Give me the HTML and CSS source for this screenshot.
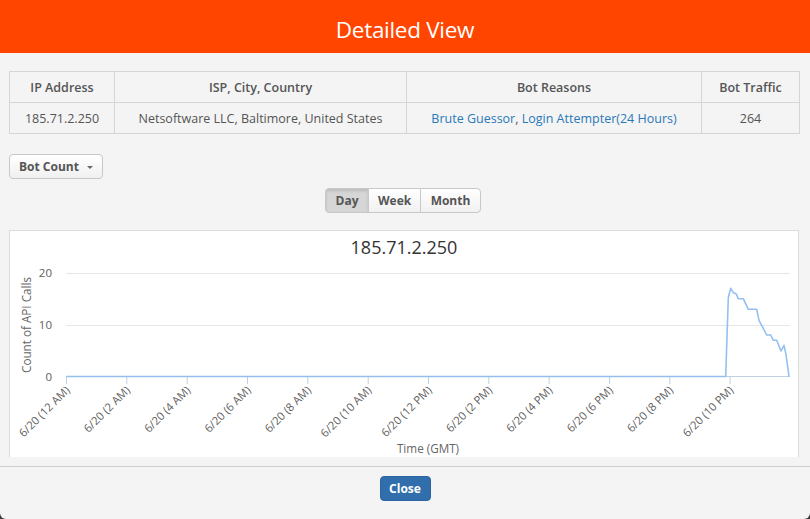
FILE: index.html
```html
<!DOCTYPE html>
<html lang="en">
<head>
<meta charset="utf-8">
<title>Detailed View</title>
<link rel="stylesheet" href="styles.css">
</head>
<body>
<div class="modal">
  <header class="modal-header">
    <h1 class="modal-title">Detailed View</h1>
  </header>
  <div class="modal-body">
    <table class="info-table">
      <colgroup>
        <col class="c1"><col class="c2"><col class="c3"><col class="c4">
      </colgroup>
      <thead>
        <tr><th>IP Address</th><th>ISP, City, Country</th><th>Bot Reasons</th><th>Bot Traffic</th></tr>
      </thead>
      <tbody>
        <tr>
          <td>185.71.2.250</td>
          <td>Netsoftware LLC, Baltimore, United States</td>
          <td><a class="link" href="#">Brute Guessor</a>, <a class="link" href="#">Login Attempter(24 Hours)</a></td>
          <td>264</td>
        </tr>
      </tbody>
    </table>

    <div class="toolbar">
      <button class="btn-default">Bot Count <span class="caret"></span></button>
    </div>

    <div class="range-row">
      <div class="btn-group">
        <button class="seg active">Day</button><button class="seg">Week</button><button class="seg">Month</button>
      </div>
    </div>

    <div class="chart">
      <svg class="chart-svg" width="788" height="227" viewBox="10 230 788 227" xmlns="http://www.w3.org/2000/svg">
        <rect x="10" y="230" width="788" height="227" fill="#ffffff"/>
        <text class="c-title" x="404" y="253" text-anchor="middle">185.71.2.250</text>
        <line x1="66" y1="272.5" x2="790" y2="272.5" class="grid"/>
        <line x1="66" y1="324.5" x2="790" y2="324.5" class="grid"/>
        <text class="ylab" x="52" y="276" text-anchor="end">20</text>
        <text class="ylab" x="52" y="328" text-anchor="end">10</text>
        <text class="ylab" x="52" y="380" text-anchor="end">0</text>
        <text class="axis-title" x="31" y="324" text-anchor="middle" transform="rotate(-90 31 324)">Count of API Calls</text>
        <g class="ticks">
          <line x1="66.5" y1="376" x2="66.5" y2="383"/>
          <line x1="126.8" y1="376" x2="126.8" y2="383"/>
          <line x1="187.2" y1="376" x2="187.2" y2="383"/>
          <line x1="247.5" y1="376" x2="247.5" y2="383"/>
          <line x1="307.8" y1="376" x2="307.8" y2="383"/>
          <line x1="368.2" y1="376" x2="368.2" y2="383"/>
          <line x1="428.5" y1="376" x2="428.5" y2="383"/>
          <line x1="488.8" y1="376" x2="488.8" y2="383"/>
          <line x1="549.1" y1="376" x2="549.1" y2="383"/>
          <line x1="609.5" y1="376" x2="609.5" y2="383"/>
          <line x1="669.8" y1="376" x2="669.8" y2="383"/>
          <line x1="730.1" y1="376" x2="730.1" y2="383"/>
        </g>
        <line x1="66" y1="375.5" x2="790" y2="375.5" class="axis"/>
        <g class="xlab">
          <text x="70.5" y="390" transform="rotate(-45 70.5 390)">6/20 (12 AM)</text>
          <text x="130.8" y="390" transform="rotate(-45 130.8 390)">6/20 (2 AM)</text>
          <text x="191.2" y="390" transform="rotate(-45 191.2 390)">6/20 (4 AM)</text>
          <text x="251.5" y="390" transform="rotate(-45 251.5 390)">6/20 (6 AM)</text>
          <text x="311.8" y="390" transform="rotate(-45 311.8 390)">6/20 (8 AM)</text>
          <text x="372.2" y="390" transform="rotate(-45 372.2 390)">6/20 (10 AM)</text>
          <text x="432.5" y="390" transform="rotate(-45 432.5 390)">6/20 (12 PM)</text>
          <text x="492.8" y="390" transform="rotate(-45 492.8 390)">6/20 (2 PM)</text>
          <text x="553.1" y="390" transform="rotate(-45 553.1 390)">6/20 (4 PM)</text>
          <text x="613.5" y="390" transform="rotate(-45 613.5 390)">6/20 (6 PM)</text>
          <text x="673.8" y="390" transform="rotate(-45 673.8 390)">6/20 (8 PM)</text>
          <text x="734.1" y="390" transform="rotate(-45 734.1 390)">6/20 (10 PM)</text>
        </g>
        <path class="series" d="M66.5,375.5 L725.7,375.5 L728.3,296.7 L730.7,287.3 L733.3,291.7 L736,292.7 L738.3,297.7 L743.3,297.7 L748.3,308.3 L756.7,308.3 L759,319.3 L766.7,334 L770.7,334 L773.3,339.3 L776.7,339.3 L781,350 L784,344.3 L786,353.3 L789,375.5"/>
        <text class="axis-title" x="428" y="452" text-anchor="middle">Time (GMT)</text>
      </svg>
    </div>
  </div>
  <footer class="modal-footer">
    <button class="btn-primary">Close</button>
  </footer>
</div>
</body>
</html>
```

FILE: styles.css
```css
* { box-sizing: border-box; }

html, body {
  margin: 0;
  padding: 0;
  background: #3b3b3b;
  font-family: "Open Sans", "Liberation Sans", Arial, sans-serif;
}

.modal {
  width: 810px;
  height: 519px;
  background: #f4f4f4;
  border-radius: 0 0 6px 6px;
  overflow: hidden;
  display: flex;
  flex-direction: column;
}

.modal-header {
  height: 53px;
  background: #ff4500;
  padding-top: 15px;
  flex: none;
}

.modal-title {
  margin: 0;
  font-size: 22.5px;
  line-height: 30px;
  font-weight: 400;
  color: #ffffff;
  text-align: center;
  letter-spacing: -0.3px;
}

.modal-body {
  height: 413px;
  padding: 18px 11px 9px 9px;
  flex: none;
  display: flex;
  flex-direction: column;
}

.info-table {
  width: 790px;
  border-collapse: collapse;
  table-layout: fixed;
  font-size: 12.5px;
  color: #555;
}

.info-table .c1 { width: 105px; }
.info-table .c2 { width: 292px; }
.info-table .c3 { width: 295px; }
.info-table .c4 { width: 98px; }

.info-table th,
.info-table td {
  border: 1px solid #d5d5d5;
  height: 31px;
  padding: 0 6px;
  text-align: center;
  vertical-align: middle;
  white-space: nowrap;
}

.info-table th {
  font-weight: 600;
  font-size: 12.5px;
}

.link {
  color: #2a79b8;
  text-decoration: none;
}

.toolbar {
  margin-top: 20px;
  display: flex;
}

.btn-default {
  height: 25px;
  width: 94px;
  padding: 0;
  display: flex;
  align-items: center;
  justify-content: center;
  gap: 8px;
  font-family: inherit;
  font-size: 12px;
  font-weight: 700;
  color: #555;
  background: linear-gradient(#ffffff, #f0f0f0);
  border: 1px solid #c8c8c8;
  border-radius: 4px;
}

.caret {
  display: inline-block;
  width: 0;
  height: 0;
  border-left: 3px solid transparent;
  border-right: 3px solid transparent;
  border-top: 3px solid #666;
  margin-top: 2px;
}

.range-row {
  margin-top: 9px;
  display: flex;
  justify-content: center;
  padding-right: 2px;
}

.btn-group {
  display: flex;
}

.seg {
  height: 25px;
  padding: 0 9px;
  font-family: inherit;
  font-size: 12px;
  font-weight: 700;
  color: #555;
  background: linear-gradient(#ffffff, #f1f1f1);
  border: 1px solid #c8c8c8;
  margin-left: -1px;
}

.seg:first-child {
  margin-left: 0;
  border-radius: 4px 0 0 4px;
  width: 44px;
}

.seg:nth-child(2) { width: 53px; }

.seg:last-child {
  border-radius: 0 4px 4px 0;
  width: 61px;
}

.seg.active {
  background: #d6d6d6;
  box-shadow: inset 0 2px 3px rgba(0, 0, 0, 0.12);
}

.chart {
  margin-top: 17px;
  width: 790px;
  height: 228px;
  background: #fff;
  border: 1px solid #dddddd;
  border-bottom: none;
  overflow: hidden;
}

.chart-svg {
  display: block;
  font-family: "Open Sans", "Liberation Sans", Arial, sans-serif;
}

.c-title {
  font-size: 18px;
  fill: #333333;
}

.grid {
  stroke: #e6e6e6;
  stroke-width: 1;
}

.axis {
  stroke: #c0d0e0;
  stroke-width: 1;
}

.ticks line {
  stroke: #c0d0e0;
  stroke-width: 1;
}

.ylab {
  font-size: 11.5px;
  fill: #606060;
}

.axis-title {
  font-size: 11.7px;
  fill: #666666;
}

.xlab text {
  font-size: 11.3px;
  fill: #606060;
  text-anchor: end;
}

.series {
  fill: none;
  stroke: #94c0f0;
  stroke-width: 1.6;
  stroke-linejoin: round;
}

.modal-footer {
  flex: 1;
  border-top: 1px solid #cfcfcf;
  padding-top: 9px;
  display: flex;
  justify-content: center;
  align-items: flex-start;
}

.btn-primary {
  width: 51px;
  height: 25px;
  font-family: inherit;
  font-size: 12px;
  font-weight: 700;
  color: #fff;
  background: #306fab;
  border: 1px solid #2b64a0;
  border-radius: 4px;
  padding: 0;
}
```
